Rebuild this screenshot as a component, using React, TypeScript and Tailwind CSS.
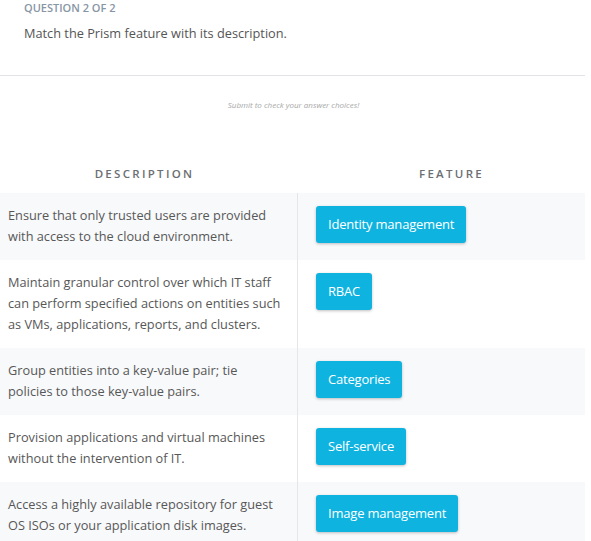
import React from 'react';

const rows = [
  {
    text: 'Ensure that only trusted users are provided with access to the cloud environment.',
    feature: 'Identity management',
  },
  {
    text: 'Maintain granular control over which IT staff can perform specified actions on entities such as VMs, applications, reports, and clusters.',
    feature: 'RBAC',
  },
  {
    text: 'Group entities into a key-value pair; tie policies to those key-value pairs.',
    feature: 'Categories',
  },
  {
    text: 'Provision applications and virtual machines without the intervention of IT.',
    feature: 'Self-service',
  },
  {
    text: 'Access a highly available repository for guest OS ISOs or your application disk images.',
    feature: 'Image management',
  },
];

export default function App() {
  return (
    <div className="w-[591px] h-[541px] overflow-hidden bg-white font-['Open_Sans',sans-serif]">
      <div className="w-[585px]">
        {/* Question header */}
        <div className="px-6 pb-[32px] border-b border-[#e1e3e6]">
          <p className="text-[11px] leading-[16px] font-semibold text-[#8796a5] uppercase">Question 2 of 2</p>
          <p className="mt-[7px] text-[12.75px] leading-[20px] text-[#555]">Match the Prism feature with its description.</p>
        </div>

        <p className="mt-[23px] text-center text-[8px] leading-[12px] italic text-[#a8a8a8] pl-[2px]">Submit to check your answer choices!</p>

        {/* Table header */}
        <div className="mt-[55px] flex text-[11.5px] leading-[16px] font-semibold text-[#6b6e72] tracking-[0.2em] uppercase">
          <div className="w-[289px] shrink-0 text-center pb-[11px]">Description</div>
          <div className="w-[325px] shrink-0 text-center pb-[11px]">Feature</div>
        </div>

        {rows.map((r, i) => (
          <div key={i} className={`flex ${i % 2 === 0 ? 'bg-[#f8f9fb]' : 'bg-white'}`}>
            <div className="w-[298px] shrink-0 border-r border-[#e4e6e9] pl-[8px] pr-[16px] pt-[12px] pb-[13px] text-[12.75px] leading-[21px] text-[#575757]">
              {r.text}
            </div>
            <div className="flex-1 pl-[18px] pt-[13px]">
              <span className="inline-block h-[37px] px-[12px] leading-[37px] rounded-[3px] bg-[#0fb3e0] text-white text-[13px] shadow-[0_1px_3px_rgba(0,0,0,0.25)] tracking-[-0.2px]">
                {r.feature}
              </span>
            </div>
          </div>
        ))}
      </div>
    </div>
  );
}
